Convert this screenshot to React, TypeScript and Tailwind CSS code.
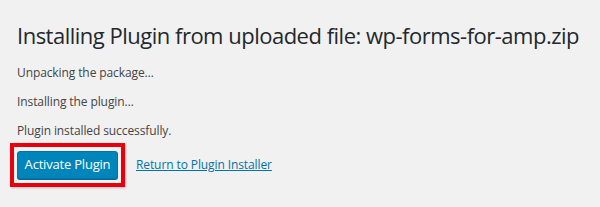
export default function App() {
  return (
    <div
      className="h-[207px] w-[600px] overflow-hidden bg-[#f1f1f1] pl-[17px] text-[#444]"
      style={{ fontFamily: '"Open Sans", "Noto Sans", Arial, sans-serif' }}
    >
      <h1 className="whitespace-nowrap pt-[19px] text-[22px] leading-[32px] font-normal tracking-[-0.5px] text-[#23282d]">
        Installing Plugin from uploaded file: wp-forms-for-amp.zip
      </h1>
      <div className="mt-[12px] flex flex-col gap-[10px] text-[12px] leading-[19px] tracking-[-0.1px]">
        <p>Unpacking the package…</p>
        <p>Installing the plugin…</p>
        <p>Plugin installed successfully.</p>
      </div>
      <div className="mt-[3px] flex items-center">
        <div className="-ml-[7px] border-4 border-[#e8000c] px-[3px] py-[4px] shadow-[1px_1px_2px_rgba(0,0,0,0.2)]">
          <button className="h-[28px] w-[101px] rounded-[3px] border border-[#0073aa] bg-[#0085ba] text-[13px] tracking-[-0.2px] text-white shadow-[0_1px_0_#006799]">
            Activate Plugin
          </button>
        </div>
        <a href="#" className="ml-[11px] text-[12px] tracking-[-0.1px] text-[#0073aa] underline">
          Return to Plugin Installer
        </a>
      </div>
    </div>
  );
}
